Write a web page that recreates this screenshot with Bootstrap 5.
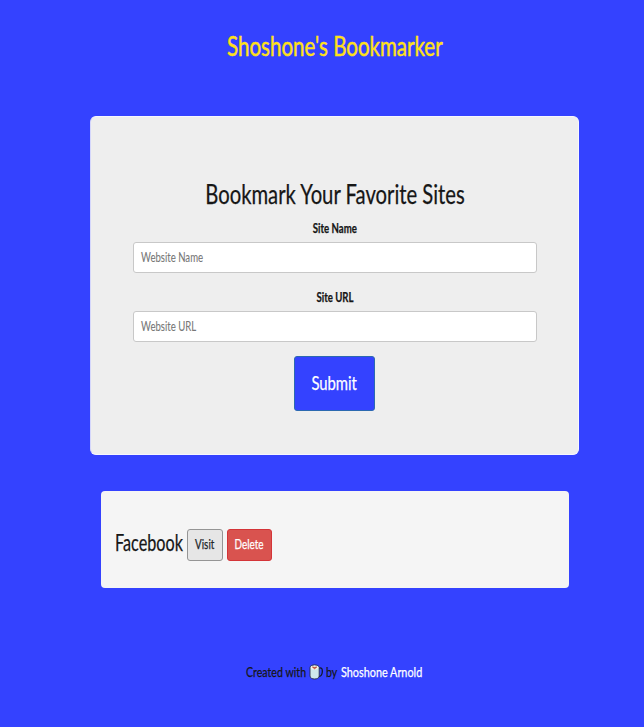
<!DOCTYPE html>
<html lang="en">
<head>
<meta charset="utf-8">
<meta name="viewport" content="width=device-width, initial-scale=1">
<title>Shoshone's Bookmarker</title>
<link href="https://cdn.jsdelivr.net/npm/bootstrap@5.3.0/dist/css/bootstrap.min.css" rel="stylesheet">
<style>
body{background:#3442ff;font-family:"Lato",sans-serif;color:#161616;line-height:1;min-height:727px}
/* horizontally condensed text */
.cond{display:flex;white-space:nowrap;justify-content:center;flex:none}
.cond.left{justify-content:flex-start}
.cond>span{display:block;flex:none;transform:scaleX(var(--k,.76));-webkit-text-stroke:.25px currentColor}
.cond.left>span{transform-origin:left}
.page{width:489px;margin-left:90px}
.brand{color:#ffe01a;font-size:27px;font-weight:400;line-height:32px;padding-top:30px;height:116px;--k:.76;margin:0}
.brand>span{-webkit-text-stroke-width:.5px}
.panel{background:#eee;border-radius:6px;height:339px;padding:61px 41px 0 42px;border:1px solid #f6f6ff;border-left-color:#d4d6fb}
.panel h2{font-size:27px;line-height:32px;margin:0 0 6px;font-weight:400;--k:.75}
.lbl{font-size:13px;font-weight:700;line-height:16px;--k:.74}
.site-input{height:31px;border:1px solid #c8c8c8;border-radius:3px;background:#fff;color:#777;font-size:13.5px;padding:0 0 0 7px;--k:.71}
.site-input>span{-webkit-text-stroke-width:.1px}
.gap-input{margin-top:6px}
.gap-input-2{margin-top:6px}
.send-row{margin-top:14px;padding-right:1px}
.btn-send{width:81px;height:55px;background:#3442ff;border:1px solid #2b69b0;border-radius:3px;color:#fff;font-size:19px;padding:0;--k:.78}
.btn-send:hover{background:#2633e8;color:#fff}
.saved{background:#f5f5f5;border-radius:4px;width:468px;height:97px;margin:36px 0 0 11px;padding:10px 0 0 14px}
.saved h3{font-size:22.5px;width:68px;margin:-5px 4px 0 0;font-weight:400;--k:.72}
.btn-small{height:32px;border-radius:3px;font-size:13px;padding:0}
.visit{width:36px;background:#e6e6e6;border:1px solid #959595}
.delete{width:45px;background:#d9534f;border:1px solid #d43438;color:#fff}
.foot{font-size:14px;line-height:18px;margin-top:75px;padding-left:156px}
.foot svg{flex:none}
.foot a{color:#fff;text-decoration:none;--k:.775}
</style>
<script src="https://cdn.jsdelivr.net/npm/bootstrap@5.3.0/dist/js/bootstrap.bundle.min.js"></script>
</head>
<body>
<div class="page">
  <h1 class="brand cond"><span>Shoshone's Bookmarker</span></h1>
  <main>
    <form class="panel">
      <h2 class="cond"><span>Bookmark Your Favorite Sites</span></h2>
      <div class="lbl cond pt-1"><span>Site Name</span></div>
      <div class="site-input gap-input form-control cond left align-items-center mb-3"><span>Website Name</span></div>
      <div class="lbl cond"><span>Site URL</span></div>
      <div class="site-input gap-input-2 form-control cond left align-items-center"><span>Website URL</span></div>
      <div class="send-row d-flex justify-content-center">
        <button type="button" class="btn btn-send cond align-items-center"><span>Submit</span></button>
      </div>
    </form>
    <section class="saved d-flex align-items-center">
      <h3 class="cond left"><span>Facebook</span></h3>
      <button type="button" class="btn btn-small visit cond align-items-center me-1"><span>Visit</span></button>
      <button type="button" class="btn btn-small delete cond align-items-center"><span>Delete</span></button>
    </section>
  </main>
  <footer class="foot d-flex">
    <div class="cond left" style="width:63px"><span>Created with</span></div>
    <svg width="14" height="18" viewBox="0 0 14 18"><path d="M9.500 5.200c3.500-1 4 1 3.800 3.800s-1.500 4.500-3.800 4.500" fill="none" stroke="#101830" stroke-width="1.300"/><path d="M1 4.500C1 1 10.200 1 10.200 4.500V13c0 4-9.200 4-9.200 0z" fill="#cfe9ec" stroke="#28304a" stroke-width=".9"/><ellipse cx="5.600" cy="4.700" rx="3.700" ry="1.900" fill="#f6efe6"/><path d="M3.400 4l2.200 1.800L7.800 4l-2.200.4z" fill="#b5452f" stroke="#b5452f" stroke-width=".7"/></svg>
    <div class="cond left" style="width:14px;margin-left:3px"><span>by</span></div>
    <a href="#" class="cond left" style="margin-left:1px"><span>Shoshone Arnold</span></a>
  </footer>
</div>
</body>
</html>
